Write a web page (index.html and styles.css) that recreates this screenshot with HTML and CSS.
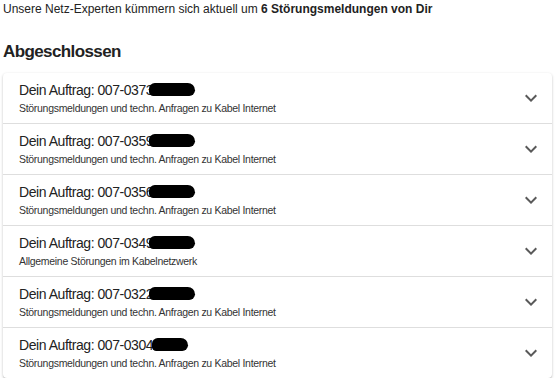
FILE: index.html
```html
<!DOCTYPE html>
<html lang="de">

<head>
  <meta charset="UTF-8" />
  <meta name="viewport" content="width=device-width, initial-scale=1" />
  <title>Meine Störungsmeldungen</title>
  <link rel="stylesheet" href="styles.css">
</head>

<body>

  <p class="intro">Unsere Netz-Experten kümmern sich aktuell um <b>6 Störungsmeldungen von Dir</b></p>

  <h2 class="titel">Abgeschlossen</h2>

  <div class="liste">
    <div class="auftrag">
      <div class="info">
        <div class="nummer">Dein Auftrag: 007-0373<span class="schwarz"></span></div>
        <div class="thema">Störungsmeldungen und techn. Anfragen zu Kabel Internet</div>
      </div>
      <svg class="pfeil" viewBox="0 0 24 24"><path d="M16.59 8.59 12 13.17 7.41 8.59 6 10l6 6 6-6z"/></svg>
    </div>
    <div class="auftrag">
      <div class="info">
        <div class="nummer">Dein Auftrag: 007-0359<span class="schwarz"></span></div>
        <div class="thema">Störungsmeldungen und techn. Anfragen zu Kabel Internet</div>
      </div>
      <svg class="pfeil" viewBox="0 0 24 24"><path d="M16.59 8.59 12 13.17 7.41 8.59 6 10l6 6 6-6z"/></svg>
    </div>
    <div class="auftrag">
      <div class="info">
        <div class="nummer">Dein Auftrag: 007-0356<span class="schwarz"></span></div>
        <div class="thema">Störungsmeldungen und techn. Anfragen zu Kabel Internet</div>
      </div>
      <svg class="pfeil" viewBox="0 0 24 24"><path d="M16.59 8.59 12 13.17 7.41 8.59 6 10l6 6 6-6z"/></svg>
    </div>
    <div class="auftrag">
      <div class="info">
        <div class="nummer">Dein Auftrag: 007-0349<span class="schwarz"></span></div>
        <div class="thema">Allgemeine Störungen im Kabelnetzwerk</div>
      </div>
      <svg class="pfeil" viewBox="0 0 24 24"><path d="M16.59 8.59 12 13.17 7.41 8.59 6 10l6 6 6-6z"/></svg>
    </div>
    <div class="auftrag">
      <div class="info">
        <div class="nummer">Dein Auftrag: 007-0322<span class="schwarz"></span></div>
        <div class="thema">Störungsmeldungen und techn. Anfragen zu Kabel Internet</div>
      </div>
      <svg class="pfeil" viewBox="0 0 24 24"><path d="M16.59 8.59 12 13.17 7.41 8.59 6 10l6 6 6-6z"/></svg>
    </div>
    <div class="auftrag">
      <div class="info">
        <div class="nummer">Dein Auftrag: 007-03042<span class="schwarz kurz"></span></div>
        <div class="thema">Störungsmeldungen und techn. Anfragen zu Kabel Internet</div>
      </div>
      <svg class="pfeil" viewBox="0 0 24 24"><path d="M16.59 8.59 12 13.17 7.41 8.59 6 10l6 6 6-6z"/></svg>
    </div>
  </div>

</body>

</html>
```

FILE: styles.css
```css
html,
body {
  font-family: 'Liberation Sans', Arial, sans-serif;
  background: #ffffff;
  color: #222;
  margin: 0;
  padding: 0;
}

body {
  padding: 0 4px 0 3px;
}

.intro {
  font-size: 12px;
  line-height: 16px;
  margin: 0;
  padding-top: 1px;
}

.titel {
  font-size: 17px;
  letter-spacing: -0.6px;
  line-height: 22px;
  margin: 24px 0 10px;
  color: #222;
}

.liste {
  background: white;
  border-radius: 4px;
  box-shadow: 0 1px 3px rgba(0, 0, 0, 0.2), 0 1px 1px rgba(0, 0, 0, 0.12);
}

.auftrag {
  display: flex;
  align-items: center;
  height: 50px;
  padding: 0 9px 0 16px;
  border-bottom: 1px solid #dedede;
}

.auftrag:last-child {
  border-bottom: none;
}

.info {
  flex: 1;
}

.nummer {
  font-size: 14px;
  letter-spacing: -0.45px;
  line-height: 18px;
  color: #222;
  display: flex;
  align-items: center;
}

.schwarz {
  display: inline-block;
  width: 46px;
  height: 13px;
  margin-left: -4px;
  background: #000;
  border-radius: 8px 10px 8px 6px;
}

.schwarz.kurz {
  width: 36px;
  margin-left: -8px;
}

.thema {
  font-size: 10.5px;
  letter-spacing: -0.3px;
  line-height: 15px;
  color: #333;
  margin-top: 2px;
}

.pfeil {
  width: 24px;
  height: 24px;
  fill: rgba(0, 0, 0, 0.65);
}
```
